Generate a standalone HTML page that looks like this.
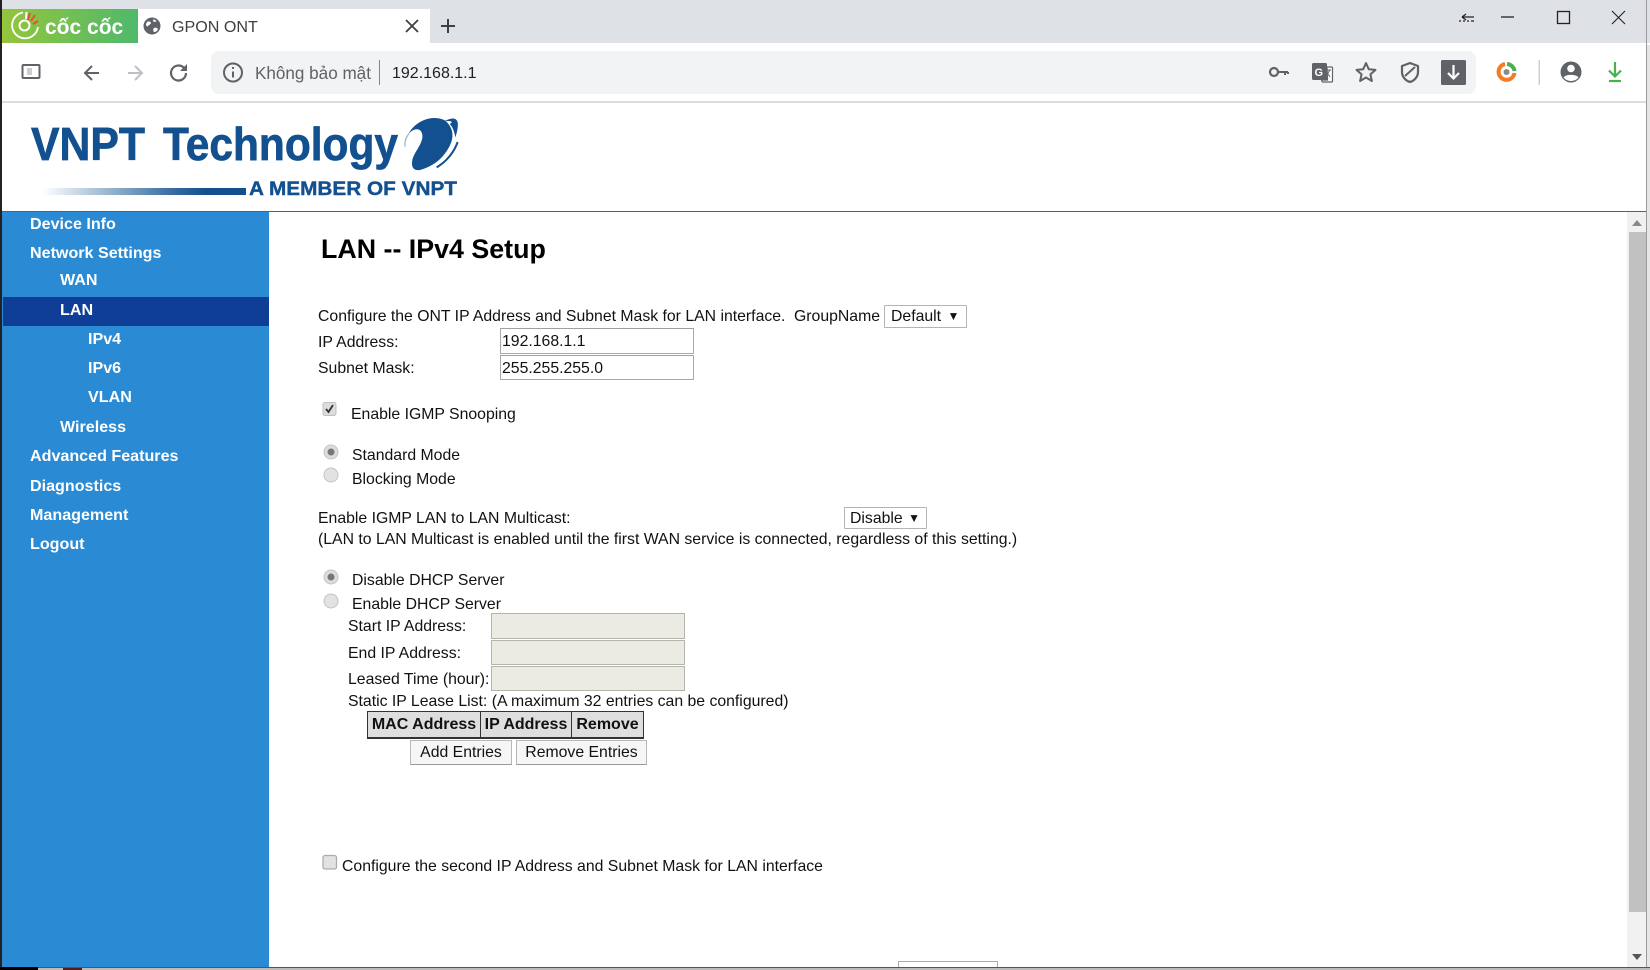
<!DOCTYPE html>
<html><head><meta charset="utf-8"><title>GPON ONT</title>
<style>
html,body{margin:0;padding:0;width:1650px;height:970px;overflow:hidden;background:#fff}
body{position:relative;font-family:"Liberation Sans",Arial,sans-serif;font-size:15.8px;color:#111}
.b{position:absolute}
.t{position:absolute;white-space:nowrap;line-height:20px;filter:blur(.3px)}
.n{position:absolute;white-space:nowrap;line-height:20px;color:#fff;font-weight:bold;font-size:16.1px;filter:blur(.25px)}
.i{position:absolute;box-sizing:border-box;border:1px solid #a9a9a9;border-top-color:#a0a0a0;background:#fff;line-height:25px;padding-left:1px}
.d{background:#ebebe4;border-color:#b5b5b0}
.s{position:absolute;box-sizing:border-box;border:1px solid #b4b4b4;background:#fff;border-radius:1px;line-height:22px;padding-left:6px;white-space:nowrap}
.btn{position:absolute;box-sizing:border-box;border:1px solid #b8b8b8;border-bottom-color:#999;background:#f6f6f6;text-align:center;line-height:24px}
.th{position:absolute;top:711px;height:28px;box-sizing:border-box;background:#dedede;border:1px solid #333;border-bottom-width:2px;font-weight:bold;font-size:16px;line-height:26px;text-align:center}
svg{position:absolute;left:0;top:0}
</style></head><body>

<div class="b" style="left:0;top:0;width:1650px;height:43px;background:#dee1e6"></div>
<div class="b" style="left:2px;top:9px;width:136px;height:34px;background:linear-gradient(90deg,#94c53c,#4fb96b)"></div>
<div class="b" style="left:138px;top:9px;width:292px;height:34px;background:#fff"></div>
<div class="t" style="left:172px;top:17px;color:#3c4043;font-size:16.1px">GPON ONT</div>
<div class="b" style="left:211px;top:51px;width:1265px;height:43px;border-radius:8px;background:#f1f3f4"></div>
<div class="b" style="left:0;top:101px;width:1650px;height:2px;background:#dcdcdc"></div>
<div class="t" style="left:255px;top:64px;color:#5f6368;font-size:17.1px">Không bảo mật</div>
<div class="b" style="left:379px;top:60px;width:1px;height:25px;background:#80868b"></div>
<div class="t" style="left:392px;top:64px;color:#202124;font-size:16px">192.168.1.1</div>

<div class="t" style="left:45px;top:16px;color:#fff;font-size:21px;font-weight:bold;line-height:24px">cốc cốc</div>

<div class="b" style="left:2px;top:211px;width:1645px;height:1px;background:#1b6fb5"></div>
<div class="b" style="left:2px;top:212px;width:267px;height:755px;background:#2a8ad4"></div>
<div class="b" style="left:3px;top:297px;width:266px;height:29px;background:#0f3e96"></div>

<div class="n" style="left:30px;top:213.5px">Device Info</div>
<div class="n" style="left:30px;top:242.5px">Network Settings</div>
<div class="n" style="left:60px;top:270px">WAN</div>
<div class="n" style="left:60px;top:300px">LAN</div>
<div class="n" style="left:88px;top:328.5px">IPv4</div>
<div class="n" style="left:88px;top:358px">IPv6</div>
<div class="n" style="left:88px;top:387px">VLAN</div>
<div class="n" style="left:60px;top:417px">Wireless</div>
<div class="n" style="left:30px;top:446px">Advanced Features</div>
<div class="n" style="left:30px;top:475.5px">Diagnostics</div>
<div class="n" style="left:30px;top:505px">Management</div>
<div class="n" style="left:30px;top:533.5px">Logout</div>

<div class="t" style="left:321px;top:234px;font-size:26.8px;font-weight:bold;line-height:30px;color:#000">LAN -- IPv4 Setup</div>

<div class="t" style="left:318px;top:307px">Configure the ONT IP Address and Subnet Mask for LAN interface.</div>
<div class="t" style="left:794px;top:307px">GroupName</div>
<div class="s" style="left:884px;top:305px;width:83px;height:23px">Default <span style="font-size:12px;position:relative;top:-1px;left:2px">▼</span></div>
<div class="t" style="left:318px;top:333px">IP Address:</div>
<div class="i" style="left:500px;top:328px;width:194px;height:26px">192.168.1.1</div>
<div class="t" style="left:318px;top:359px">Subnet Mask:</div>
<div class="i" style="left:500px;top:355px;width:194px;height:25px">255.255.255.0</div>
<div class="t" style="left:351px;top:405px">Enable IGMP Snooping</div>
<div class="t" style="left:352px;top:446px">Standard Mode</div>
<div class="t" style="left:352px;top:469.5px">Blocking Mode</div>
<div class="t" style="left:318px;top:508.5px">Enable IGMP LAN to LAN Multicast:</div>
<div class="s" style="left:844px;top:507px;width:83px;height:22px;padding-left:5px">Disable <span style="font-size:12px;position:relative;top:-1px;left:1px">▼</span></div>
<div class="t" style="left:318px;top:529.5px">(LAN to LAN Multicast is enabled until the first WAN service is connected, regardless of this setting.)</div>
<div class="t" style="left:352px;top:571px">Disable DHCP Server</div>
<div class="t" style="left:352px;top:595px">Enable DHCP Server</div>
<div class="t" style="left:348px;top:617px">Start IP Address:</div>
<div class="i d" style="left:491px;top:613px;width:194px;height:26px"></div>
<div class="t" style="left:348px;top:643.5px">End IP Address:</div>
<div class="i d" style="left:491px;top:640px;width:194px;height:25px"></div>
<div class="t" style="left:348px;top:670px">Leased Time (hour):</div>
<div class="i d" style="left:491px;top:666px;width:194px;height:25px"></div>
<div class="t" style="left:348px;top:692px">Static IP Lease List: (A maximum 32 entries can be configured)</div>

<div class="th" style="left:367px;width:114px">MAC Address</div>
<div class="th" style="left:480px;width:92px">IP Address</div>
<div class="th" style="left:571px;width:73px">Remove</div>
<div class="btn" style="left:410px;top:740px;width:102px;height:25px">Add Entries</div>
<div class="btn" style="left:516px;top:740px;width:131px;height:25px">Remove Entries</div>
<div class="t" style="left:342px;top:856.5px">Configure the second IP Address and Subnet Mask for LAN interface</div>
<div class="b" style="left:898px;top:961px;width:100px;height:6px;box-sizing:border-box;border:1px solid #aaa;border-bottom:0;background:#fff"></div>

<div class="b" style="left:1627px;top:212px;width:19px;height:755px;background:#f1f1f1"></div>
<div class="b" style="left:1629px;top:232px;width:17px;height:680px;background:#c1c1c1"></div>
<div class="b" style="left:1646px;top:0;width:1px;height:970px;background:#9a9a9a"></div>
<div class="b" style="left:1647px;top:45px;width:3px;height:925px;background:#e6e6e6"></div>
<div class="b" style="left:0;top:0;width:2px;height:970px;background:#222"></div>
<div class="b" style="left:0;top:967px;width:1650px;height:1px;background:#555"></div>
<div class="b" style="left:0;top:968px;width:1650px;height:2px;background:#bbb"></div>
<div class="b" style="left:0;top:967px;width:38px;height:3px;background:#000"></div>
<div class="b" style="left:63px;top:968px;width:19px;height:2px;background:#5a1a1a"></div>

<svg width="1650" height="970" viewBox="0 0 1650 970" fill="none">
  <defs>
    <linearGradient id="lg" x1="0" x2="1" y1="0" y2="0">
      <stop offset="0" stop-color="#12508f" stop-opacity="0"/>
      <stop offset=".65" stop-color="#12508f" stop-opacity=".85"/>
      <stop offset=".8" stop-color="#12508f"/>
    </linearGradient>
  </defs>

  <!-- logo -->
  <text x="31" y="160" font-family="Liberation Sans" font-weight="bold" font-size="46" fill="#12508f" stroke="#12508f" stroke-width=".7" textLength="114" lengthAdjust="spacingAndGlyphs">VNPT</text>
  <text x="163" y="160" font-family="Liberation Sans" font-weight="bold" font-size="46" fill="#12508f" stroke="#12508f" stroke-width=".7" textLength="235" lengthAdjust="spacingAndGlyphs">Technology</text>
  <text x="249" y="195" font-family="Liberation Sans" font-weight="bold" font-size="19.500" fill="#12508f" stroke="#12508f" stroke-width=".4" textLength="208" lengthAdjust="spacingAndGlyphs">A MEMBER OF VNPT</text>
  <rect x="42" y="188" width="204" height="7" fill="url(#lg)"/>
  <g transform="translate(395 110) scale(.3333)">
    <path d="M40 72C60 35 100 20 130 25C145 27 155 32 160 42C175 60 178 85 160 115C140 150 110 170 75 180C55 183 48 170 52 150C58 125 85 100 82 75C80 55 60 50 40 72Z" fill="#12508f"/>
    <path d="M150 33C165 24 185 20 188 38C190 50 186 68 181 82C178 65 174 52 164 42C175 36 172 32 150 33Z" fill="#12508f"/>
    <path d="M188 96C178 125 155 155 125 172" stroke="#12508f" stroke-width="6"/>
    <path d="M30 110C28 95 33 82 42 70" stroke="#9db8d3" stroke-width="4"/>
  </g>

  <!-- coc coc ring -->
  <path d="M23 12.500A13 13 0 1 0 38 27" stroke="#fff" stroke-width="1.800"/>
  <circle cx="24.500" cy="25.500" r="5" stroke="#fff" stroke-width="2"/>
  <path d="M30 13l-2 7M35 15l-4 6M38 21l-5 3" stroke="#ef4b2f" stroke-width="2"/>
  <path d="M26.500 12l-.5 7" stroke="#fff" stroke-width="2"/>

  <!-- tab icons -->
  <circle cx="152" cy="26" r="8.500" fill="#5f6368"/>
  <path d="M147 22c2-1 3-1 4 1c0 1-2 2-3 3c-1 1-2 0-2-2zM154 28c2-1 3 0 4 1c-1 2-2 3-4 3c-1-1-1-3 0-4zM153 19.500c2 0 3 1 3.500 2l-3 .5z" fill="#fff"/>
  <path d="M406 20l12 12M418 20l-12 12" stroke="#3c4043" stroke-width="1.800"/>
  <path d="M448 19v14M441 26h14" stroke="#3c4043" stroke-width="2"/>

  <!-- window controls -->
  <path d="M1462 17h12M1462 17l4-3M1462 17l4 3M1459 21h2M1463 21h2M1467 21h2M1471 21h3" stroke="#222" stroke-width="1.300"/>
  <path d="M1501 17h13" stroke="#222" stroke-width="1.300"/>
  <rect x="1557.500" y="11.500" width="12" height="12" stroke="#222" stroke-width="1.300"/>
  <path d="M1612 11l13 13M1625 11l-13 13" stroke="#222" stroke-width="1.100"/>

  <!-- toolbar left -->
  <rect x="22.500" y="65" width="17" height="13" rx="1" stroke="#5f6368" stroke-width="2"/>
  <rect x="27" y="68" width="5" height="7" fill="#ccc"/>
  <path d="M99 73H86M92 66l-7 7l7 7" stroke="#5f6368" stroke-width="2"/>
  <path d="M128 73H142M135 66l7 7l-7 7" stroke="#bdc1c6" stroke-width="2"/>
  <path d="M186 73a7.500 7.500 0 1 1-2.200-5.300" stroke="#5f6368" stroke-width="2.200"/>
  <path d="M187 64v7h-7z" fill="#5f6368"/>
  <circle cx="233" cy="72.500" r="9" stroke="#5f6368" stroke-width="2"/>
  <path d="M233 71.500v6M233 67v2" stroke="#5f6368" stroke-width="2"/>

  <!-- omnibox right icons -->
  <circle cx="1274" cy="72" r="4" stroke="#5f6368" stroke-width="2.200"/>
  <path d="M1278 72h10M1285 72v3M1288 72v2" stroke="#5f6368" stroke-width="2"/>
  <rect x="1312" y="63" width="15" height="17" rx="1.500" fill="#5f6368"/>
  <path d="M1327 67h4.500a1 1 0 0 1 1 1v13a1 1 0 0 1-1 1h-9l-1-2h6z" fill="#fff" stroke="#5f6368" stroke-width="1.200"/>
  <text x="1314.500" y="76" font-family="Liberation Sans" font-weight="bold" font-size="11" fill="#fff">G</text>
  <path d="M1325 70h6M1330 70l-4 6M1326 71l4 6" stroke="#5f6368" stroke-width="1"/>
  <path d="M1366 63l2.800 6.300 6.700.6-5.100 4.500 1.500 6.600-5.900-3.500-5.900 3.500 1.500-6.600-5.100-4.500 6.700-.6z" stroke="#5f6368" stroke-width="2" stroke-linejoin="round"/>
  <path d="M1410 63l8 3v6c0 5-4 9-8 10c-4-1-8-5-8-10v-6z" stroke="#5f6368" stroke-width="2.200" stroke-linejoin="round"/>
  <path d="M1405 76l10-9" stroke="#5f6368" stroke-width="2"/>
  <rect x="1441" y="60" width="25" height="25" rx="1.500" fill="#5f6368"/>
  <path d="M1453.500 65v13M1448 73l5.500 5.500l5.500-5.500" stroke="#fff" stroke-width="2.200"/>

  <!-- extension icon -->
  <path d="M1505 64A8 8 0 1 0 1514.500 73" stroke="#f47b20" stroke-width="4"/>
  <path d="M1507 64A8 8 0 0 1 1514.500 71" stroke="#4caf50" stroke-width="4"/>
  <circle cx="1506.500" cy="72" r="3" fill="#8a8a8a"/>

  <rect x="1538.500" y="60" width="1.500" height="25" fill="#d0d0d0"/>
  <circle cx="1571" cy="72" r="10.500" fill="#5f6368"/>
  <circle cx="1571" cy="68.500" r="3.800" fill="#fff"/>
  <path d="M1563.500 77.500c2-3.500 13-3.500 15 0c-2 2.500-5 3.500-7.500 3.500s-5.500-1-7.500-3.500z" fill="#fff"/>
  <path d="M1615 62v14M1609 70.500l6 6l6-6" stroke="#4caf50" stroke-width="2.200"/>
  <path d="M1609 81h12" stroke="#4caf50" stroke-width="2.200"/>

  <!-- checkboxes -->
  <rect x="323" y="402.500" width="13" height="13" rx="2" fill="#dcdcdc" stroke="#c0c0c0"/>
  <path d="M326 409l2.500 3l4.500-7" stroke="#333" stroke-width="1.800"/>
  <rect x="323" y="855.500" width="13.500" height="13.500" rx="2" fill="#e2e2e2" stroke="#adadad" stroke-width="1.300"/>

  <!-- radios -->
  <circle cx="331" cy="452" r="7" fill="#dcdcdc" stroke="#c4c4c4"/><circle cx="331" cy="452" r="3.500" fill="#777"/>
  <circle cx="331" cy="475" r="7" fill="#e2e2e2" stroke="#c4c4c4"/>
  <circle cx="331" cy="577" r="7" fill="#dcdcdc" stroke="#c4c4c4"/><circle cx="331" cy="577" r="3.500" fill="#777"/>
  <circle cx="331" cy="601" r="7" fill="#e2e2e2" stroke="#c4c4c4"/>

  <!-- scroll arrows -->
  <path d="M1637 220l5 6h-10z" fill="#888"/>
  <path d="M1632 954h10l-5 6z" fill="#555"/>
</svg>
</body></html>
